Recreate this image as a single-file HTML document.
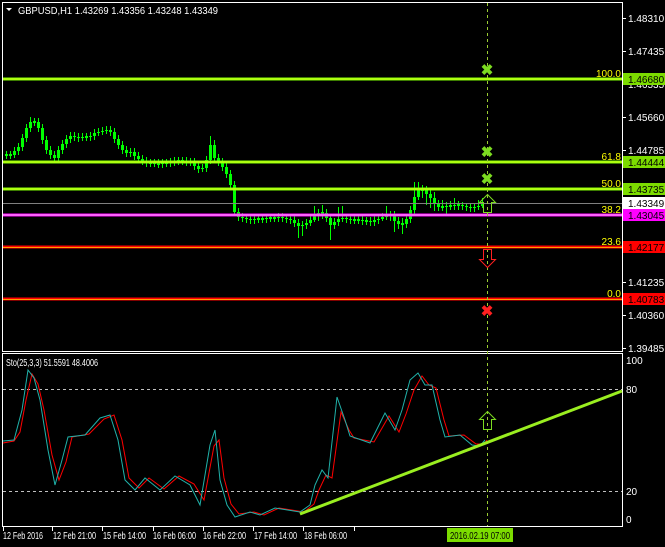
<!DOCTYPE html>
<html><head><meta charset="utf-8"><style>
html,body{margin:0;padding:0;background:#000;width:665px;height:547px;overflow:hidden}
svg{display:block;font-family:"Liberation Sans",sans-serif;font-size:10px}
</style></head><body>
<svg width="665" height="547" xmlns="http://www.w3.org/2000/svg">
<rect width="665" height="547" fill="#000"/>
<rect x="2.5" y="2.5" width="620" height="349" fill="none" stroke="#fff"/>
<rect x="2.5" y="353.5" width="620" height="173" fill="none" stroke="#fff"/>
<!-- candles wicks -->
<path fill="none" stroke="#00ff00" stroke-width="1" d="M6.5 151V159M10.5 151V159M14.5 147V158M18.5 143V155M22.5 134V151M26.5 124V142M30.5 117V132M34.5 118V126M38.5 118V132M42.5 124V144M46.5 136V154M50.5 146V159M54.5 151V162M58.5 146V162M62.5 140V154M66.5 135V148M70.5 132V143M74.5 132V141M78.5 133V142M82.5 133V141M86.5 133V141M90.5 132V141M94.5 129V140M98.5 128V136M102.5 127V135M106.5 126V134M110.5 126V136M114.5 128V143M118.5 135V149M122.5 141V154M126.5 146V157M130.5 148V157M134.5 148V160M138.5 152V163M142.5 155V165M146.5 157V167M150.5 159V167M154.5 159V167M158.5 159V168M162.5 159V168M166.5 159V167M170.5 158V167M174.5 157V166M178.5 157V165M182.5 157V165M186.5 157V166M190.5 158V166M194.5 158V170M198.5 162V173M202.5 164V172M206.5 156V172M210.5 136V164M214.5 140V162M218.5 154V166M222.5 158V171M226.5 163V178M230.5 170V189M234.5 181V216M238.5 208V221M242.5 213V222M246.5 214V223M250.5 215V224M254.5 215V224M258.5 215V223M262.5 215V223M266.5 214V223M270.5 214V222M274.5 214V222M278.5 213V222M282.5 213V222M286.5 214V223M290.5 215V224M294.5 216V227M298.5 219V238M302.5 221V236M306.5 219V229M310.5 216V226M314.5 206V222M318.5 209V221M322.5 205V219M326.5 209V222M330.5 214V240M334.5 218V229M338.5 207V226M342.5 206V222M346.5 214V223M350.5 215V224M354.5 216V224M358.5 216V224M362.5 216V225M366.5 217V225M370.5 217V226M374.5 215V226M378.5 215V224M382.5 213V221M386.5 206V220M390.5 211V221M394.5 211V232M398.5 217V229M402.5 218V234M406.5 215V228M410.5 206V223M414.5 182V214M418.5 182V200M422.5 185V198M426.5 186V205M430.5 190V208M434.5 192V211M438.5 200V211M442.5 200V211M446.5 202V214M450.5 201V210M454.5 198V210M458.5 201V210M462.5 202V210M466.5 203V211M470.5 204V212M474.5 203V212M478.5 200V210M482.5 198V208"/>
<!-- candle bodies -->
<path fill="none" stroke="#00ff00" stroke-width="3" d="M6.5 154V156M10.5 154V156M14.5 155V151M18.5 151V147M22.5 147V138M26.5 138V128M30.5 128V122M34.5 121V123M38.5 122V128M42.5 128V140M46.5 140V150M50.5 150V155M54.5 155V158M58.5 158V150M62.5 150V144M66.5 144V139M70.5 139V136M74.5 136V137M78.5 137V138M82.5 138V137M86.5 136V138M90.5 137V136M94.5 136V133M98.5 133V132M102.5 132V131M106.5 131V130M110.5 130V132M114.5 132V139M118.5 139V145M122.5 145V150M126.5 150V153M130.5 153V152M134.5 152V156M138.5 156V159M142.5 159V161M146.5 161V163M150.5 162V164M154.5 162V164M158.5 163V165M162.5 164V163M166.5 162V164M170.5 163V162M174.5 162V161M178.5 160V162M182.5 160V162M186.5 161V163M190.5 161V163M194.5 162V166M198.5 166V169M202.5 169V168M206.5 168V160M210.5 160V145M214.5 145V158M218.5 158V162M222.5 162V167M226.5 167V174M230.5 174V185M234.5 185V212M238.5 212V217M242.5 217V218M246.5 218V219M250.5 219V220M254.5 220V219M258.5 218V220M262.5 218V220M266.5 219V218M270.5 217V219M274.5 217V219M278.5 218V217M282.5 217V218M286.5 218V219M290.5 219V220M294.5 220V223M298.5 223V226M302.5 226V225M306.5 225V223M310.5 223V220M314.5 220V216M318.5 216V213M322.5 212V214M326.5 213V218M330.5 218V225M334.5 225V222M338.5 222V219M342.5 219V218M346.5 218V219M350.5 219V220M354.5 219V221M358.5 219V221M362.5 220V221M366.5 220V222M370.5 221V222M374.5 222V220M378.5 220V219M382.5 219V217M386.5 217V216M390.5 216V215M394.5 215V221M398.5 221V224M402.5 223V225M406.5 224V219M410.5 219V210M414.5 210V197M418.5 197V190M422.5 189V191M426.5 190V194M430.5 194V198M434.5 198V204M438.5 204V207M442.5 206V208M446.5 207V206M450.5 205V207M454.5 206V205M458.5 204V206M462.5 205V206M466.5 206V207M470.5 207V208M474.5 208V207M478.5 207V206M482.5 206V204"/>
<!-- fib lines -->
<line x1="3" x2="622" y1="79" y2="79" stroke="#7cfc00" stroke-width="3"/><line x1="3" x2="622" y1="79" y2="79" stroke="#e0ff20" stroke-width="1"/>
<line x1="3" x2="622" y1="162" y2="162" stroke="#7cfc00" stroke-width="3"/><line x1="3" x2="622" y1="162" y2="162" stroke="#e0ff20" stroke-width="1"/>
<line x1="3" x2="622" y1="189" y2="189" stroke="#7cfc00" stroke-width="3"/><line x1="3" x2="622" y1="189" y2="189" stroke="#e0ff20" stroke-width="1"/>
<line x1="3" x2="622" y1="203.5" y2="203.5" stroke="#808080" stroke-width="1"/>
<line x1="3" x2="622" y1="215" y2="215" stroke="#ff00ff" stroke-width="3"/><line x1="3" x2="622" y1="215" y2="215" stroke="#ffc0ff" stroke-width="1"/>
<line x1="3" x2="622" y1="247" y2="247" stroke="#ff0000" stroke-width="3"/><line x1="3" x2="622" y1="247.5" y2="247.5" stroke="#ffd000" stroke-width="0.8"/>
<line x1="3" x2="622" y1="299" y2="299" stroke="#ff0000" stroke-width="3"/><line x1="3" x2="622" y1="299.5" y2="299.5" stroke="#ffd000" stroke-width="0.8"/>
<g fill="#ffff00" text-anchor="end" font-size="10">
<text x="621" y="77">100.0</text><text x="621" y="160">61.8</text><text x="621" y="187">50.0</text>
<text x="621" y="213">38.2</text><text x="621" y="245">23.6</text><text x="621" y="297">0.0</text>
</g>
<line x1="487.5" x2="487.5" y1="3" y2="526" stroke="#9acd32" stroke-dasharray="3,3"/>
<g font-size="15" font-weight="bold" text-anchor="middle">
<text x="487" y="75" fill="#7cdc20">✖</text>
<text x="487" y="157" fill="#7cdc20">✖</text>
<text x="487" y="184" fill="#7cdc20">✖</text>
<text x="487" y="316" fill="#ff2020">✖</text>
</g>
<path d="M479.5 202.5 L487.5 194.5 L495.5 202.5 L491.5 202.5 L491.5 212.5 L483.5 212.5 L483.5 202.5 Z" fill="none" stroke="#7cdc20"/>
<path d="M479.5 259.5 L487.5 267.5 L495.5 259.5 L491.5 259.5 L491.5 249.5 L483.5 249.5 L483.5 259.5 Z" fill="none" stroke="#ff2020"/>
<path d="M479.5 419.5 L487.5 411.5 L495.5 419.5 L491.5 419.5 L491.5 429.5 L483.5 429.5 L483.5 419.5 Z" fill="none" stroke="#7cdc20"/>
<path d="M6 8 L12 8 L9 11 Z" fill="#fff"/>
<text x="18" y="14" fill="#fff" font-size="10" textLength="200" lengthAdjust="spacingAndGlyphs">GBPUSD,H1  1.43269 1.43356 1.43248 1.43349</text>
<g fill="#fff" font-size="10">
<g stroke="#fff"><line x1="622" x2="626" y1="18.5" y2="18.5"/><line x1="622" x2="626" y1="51.5" y2="51.5"/><line x1="622" x2="626" y1="84.5" y2="84.5"/><line x1="622" x2="626" y1="117.5" y2="117.5"/><line x1="622" x2="626" y1="150.5" y2="150.5"/><line x1="622" x2="626" y1="282.5" y2="282.5"/><line x1="622" x2="626" y1="315.5" y2="315.5"/><line x1="622" x2="626" y1="348.5" y2="348.5"/></g>
<text x="628" y="22">1.48310</text><text x="628" y="55">1.47435</text><text x="628" y="88">1.46535</text><text x="628" y="121">1.45660</text><text x="628" y="154">1.44785</text><text x="628" y="286">1.41235</text><text x="628" y="319">1.40360</text><text x="628" y="352">1.39485</text>
</g>
<g font-size="10">
<rect x="623" y="73" width="42" height="12" fill="#7cdc00"/><text x="628" y="83" fill="#000">1.46680</text>
<rect x="623" y="156" width="42" height="12" fill="#7cdc00"/><text x="628" y="166" fill="#000">1.44444</text>
<rect x="623" y="183" width="42" height="12" fill="#7cdc00"/><text x="628" y="193" fill="#000">1.43735</text>
<rect x="623" y="197" width="42" height="12" fill="#fff"/><text x="628" y="207" fill="#000">1.43349</text>
<rect x="623" y="209" width="42" height="12" fill="#ff00ff"/><text x="628" y="219" fill="#000">1.43045</text>
<rect x="623" y="241" width="42" height="12" fill="#ff0000"/><text x="628" y="251" fill="#000">1.42177</text>
<rect x="623" y="293" width="42" height="12" fill="#ff0000"/><text x="628" y="303" fill="#000">1.40783</text>
</g>
<text x="6" y="366" fill="#fff" font-size="10" textLength="92" lengthAdjust="spacingAndGlyphs">Sto(25,3,3) 51.5591 48.4006</text>
<line x1="3" x2="622" y1="389.5" y2="389.5" stroke="#c0c0c0" stroke-dasharray="3,3"/>
<line x1="3" x2="622" y1="491.5" y2="491.5" stroke="#c0c0c0" stroke-dasharray="3,3"/>
<g fill="#fff" font-size="10"><text x="626" y="364">100</text><text x="626" y="393">80</text><text x="626" y="495">20</text><text x="626" y="523">0</text></g>
<polyline fill="none" stroke="#ff0000" points="3,443 14,441 20,432 26,400 32,374 38,384 44,410 52,455 59,480 66,462 72,437 89,434 104,419 114,415 122,440 129,478 139,488 149,478 164,489 179,476 194,484 204,500 214,446 219,440 224,478 231,504 239,514 254,512 264,515 279,508 304,512 314,504 319,490 326,475 332,478 341,412 349,430 354,438 374,442 389,416 399,432 406,414 414,390 422,376 429,385 436,388 444,420 449,436 464,435 476,444 484,444 487,440"/>
<polyline fill="none" stroke="#20b2aa" points="3,441 14,440 22,410 28,370 34,378 40,400 48,450 55,485 62,460 68,437 85,435 100,418 110,415 118,440 125,480 135,490 145,478 160,490 175,476 190,485 200,505 210,445 215,430 220,480 227,505 235,517 250,512 260,515 275,508 300,512 310,505 315,485 322,470 328,478 337,397 345,420 350,436 370,443 385,413 395,430 402,410 410,380 418,373 425,385 432,385 440,420 445,437 460,435 472,445 480,446 485,440"/>
<line x1="300" y1="514" x2="622" y2="391" stroke="#9aee20" stroke-width="3"/>
<g stroke="#fff"><line x1="3.5" x2="3.5" y1="527" y2="531"/><line x1="52.5" x2="52.5" y1="527" y2="531"/><line x1="102.5" x2="102.5" y1="527" y2="531"/><line x1="153.5" x2="153.5" y1="527" y2="531"/><line x1="203.5" x2="203.5" y1="527" y2="531"/><line x1="253.5" x2="253.5" y1="527" y2="531"/><line x1="303.5" x2="303.5" y1="527" y2="531"/><line x1="354.5" x2="354.5" y1="527" y2="531"/></g>
<g fill="#fff" font-size="10" lengthAdjust="spacingAndGlyphs"><text x="3" y="539" textLength="40" lengthAdjust="spacingAndGlyphs">12 Feb 2016</text><text x="53" y="539" textLength="43" lengthAdjust="spacingAndGlyphs">12 Feb 21:00</text><text x="103" y="539" textLength="43" lengthAdjust="spacingAndGlyphs">15 Feb 14:00</text><text x="153" y="539" textLength="43" lengthAdjust="spacingAndGlyphs">16 Feb 06:00</text><text x="203" y="539" textLength="43" lengthAdjust="spacingAndGlyphs">16 Feb 22:00</text><text x="254" y="539" textLength="43" lengthAdjust="spacingAndGlyphs">17 Feb 14:00</text><text x="304" y="539" textLength="43" lengthAdjust="spacingAndGlyphs">18 Feb 06:00</text></g>
<rect x="447" y="528" width="66" height="14" fill="#7cdc00"/><text x="450" y="539" fill="#000" font-size="10" textLength="60" lengthAdjust="spacingAndGlyphs">2016.02.19 07:00</text>
</svg>
</body></html>
